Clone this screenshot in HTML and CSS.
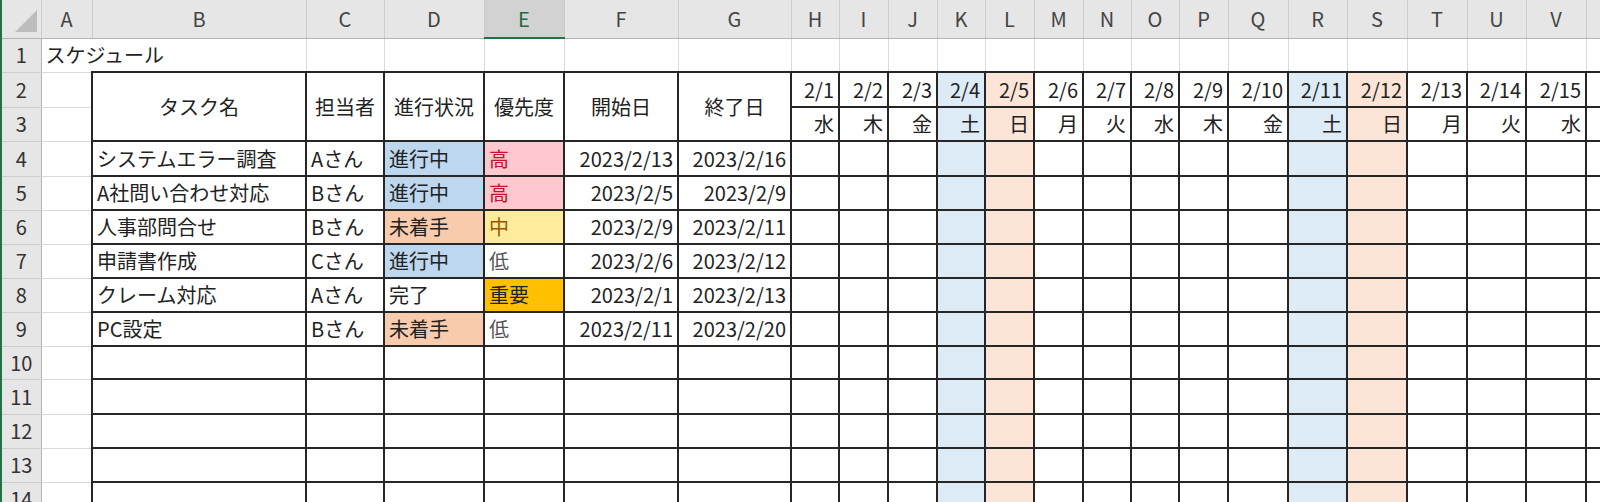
FILE: index.html
```html
<!DOCTYPE html>
<html lang="ja">
<head>
    <meta charset="UTF-8">
    <title>スケジュール</title>
    <link rel="stylesheet" href="styles.css">
</head>
<body>
<div class="sheet">
<table class="grid">
    <colgroup>
        <col class="w-rh"><col class="w-a"><col class="w-b"><col class="w-c"><col class="w-d"><col class="w-e"><col class="w-f"><col class="w-g">
        <col class="w-48"><col class="w-49"><col class="w-49"><col class="w-48"><col class="w-49"><col class="w-49"><col class="w-48"><col class="w-48"><col class="w-49">
        <col class="w-60"><col class="w-59"><col class="w-60"><col class="w-60"><col class="w-59"><col class="w-60"><col class="w-60">
    </colgroup>
    <thead>
        <tr class="colhead">
            <th class="corner"><span class="tri"></span></th>
            <th>A</th><th>B</th><th>C</th><th>D</th><th class="sel">E</th><th>F</th><th>G</th>
            <th>H</th><th>I</th><th>J</th><th>K</th><th>L</th><th>M</th><th>N</th><th>O</th><th>P</th>
            <th>Q</th><th>R</th><th>S</th><th>T</th><th>U</th><th>V</th><th></th>
        </tr>
    </thead>
    <tbody class="top">
        <tr class="r34">
            <th class="rh">1</th>
            <td colspan="2" class="title">スケジュール</td>
            <td></td><td></td><td></td><td></td><td></td>
            <td></td><td></td><td></td><td></td><td></td><td></td><td></td><td></td><td></td>
            <td></td><td></td><td></td><td></td><td></td><td></td><td></td>
        </tr>
    </tbody>
    <tbody class="tasks">
        <tr class="r35">
            <th class="rh">2</th>
            <td class="a"></td>
            <td rowspan="2" class="head">タスク名</td>
            <td rowspan="2" class="head">担当者</td>
            <td rowspan="2" class="head">進行状況</td>
            <td rowspan="2" class="head">優先度</td>
            <td rowspan="2" class="head">開始日</td>
            <td rowspan="2" class="head">終了日</td>
            <td class="num">2/1</td><td class="num">2/2</td><td class="num">2/3</td>
            <td class="num sat">2/4</td><td class="num sun">2/5</td>
            <td class="num">2/6</td><td class="num">2/7</td><td class="num">2/8</td><td class="num">2/9</td><td class="num">2/10</td>
            <td class="num sat">2/11</td><td class="num sun">2/12</td>
            <td class="num">2/13</td><td class="num">2/14</td><td class="num">2/15</td><td></td>
        </tr>
        <tr class="r34">
            <th class="rh">3</th>
            <td class="a"></td>
            <td class="num">水</td><td class="num">木</td><td class="num">金</td>
            <td class="num sat">土</td><td class="num sun">日</td>
            <td class="num">月</td><td class="num">火</td><td class="num">水</td><td class="num">木</td><td class="num">金</td>
            <td class="num sat">土</td><td class="num sun">日</td>
            <td class="num">月</td><td class="num">火</td><td class="num">水</td><td></td>
        </tr>
        <tr class="r35">
            <th class="rh">4</th><td class="a"></td>
            <td>システムエラー調査</td><td>Aさん</td><td class="doing">進行中</td><td class="high">高</td>
            <td class="num">2023/2/13</td><td class="num">2023/2/16</td>
            <td></td><td></td><td></td><td class="sat"></td><td class="sun"></td><td></td><td></td><td></td><td></td><td></td><td class="sat"></td><td class="sun"></td><td></td><td></td><td></td><td></td>
        </tr>
        <tr class="r34">
            <th class="rh">5</th><td class="a"></td>
            <td>A社問い合わせ対応</td><td>Bさん</td><td class="doing">進行中</td><td class="high">高</td>
            <td class="num">2023/2/5</td><td class="num">2023/2/9</td>
            <td></td><td></td><td></td><td class="sat"></td><td class="sun"></td><td></td><td></td><td></td><td></td><td></td><td class="sat"></td><td class="sun"></td><td></td><td></td><td></td><td></td>
        </tr>
        <tr class="r34">
            <th class="rh">6</th><td class="a"></td>
            <td>人事部問合せ</td><td>Bさん</td><td class="todo">未着手</td><td class="mid">中</td>
            <td class="num">2023/2/9</td><td class="num">2023/2/11</td>
            <td></td><td></td><td></td><td class="sat"></td><td class="sun"></td><td></td><td></td><td></td><td></td><td></td><td class="sat"></td><td class="sun"></td><td></td><td></td><td></td><td></td>
        </tr>
        <tr class="r34">
            <th class="rh">7</th><td class="a"></td>
            <td>申請書作成</td><td>Cさん</td><td class="doing">進行中</td><td class="low">低</td>
            <td class="num">2023/2/6</td><td class="num">2023/2/12</td>
            <td></td><td></td><td></td><td class="sat"></td><td class="sun"></td><td></td><td></td><td></td><td></td><td></td><td class="sat"></td><td class="sun"></td><td></td><td></td><td></td><td></td>
        </tr>
        <tr class="r34">
            <th class="rh">8</th><td class="a"></td>
            <td>クレーム対応</td><td>Aさん</td><td>完了</td><td class="urgent">重要</td>
            <td class="num">2023/2/1</td><td class="num">2023/2/13</td>
            <td></td><td></td><td></td><td class="sat"></td><td class="sun"></td><td></td><td></td><td></td><td></td><td></td><td class="sat"></td><td class="sun"></td><td></td><td></td><td></td><td></td>
        </tr>
        <tr class="r34">
            <th class="rh">9</th><td class="a"></td>
            <td>PC設定</td><td>Bさん</td><td class="todo">未着手</td><td class="low">低</td>
            <td class="num">2023/2/11</td><td class="num">2023/2/20</td>
            <td></td><td></td><td></td><td class="sat"></td><td class="sun"></td><td></td><td></td><td></td><td></td><td></td><td class="sat"></td><td class="sun"></td><td></td><td></td><td></td><td></td>
        </tr>
        <tr class="r33">
            <th class="rh">10</th><td class="a"></td>
            <td></td><td></td><td></td><td></td><td></td><td></td>
            <td></td><td></td><td></td><td class="sat"></td><td class="sun"></td><td></td><td></td><td></td><td></td><td></td><td class="sat"></td><td class="sun"></td><td></td><td></td><td></td><td></td>
        </tr>
        <tr class="r35">
            <th class="rh">11</th><td class="a"></td>
            <td></td><td></td><td></td><td></td><td></td><td></td>
            <td></td><td></td><td></td><td class="sat"></td><td class="sun"></td><td></td><td></td><td></td><td></td><td></td><td class="sat"></td><td class="sun"></td><td></td><td></td><td></td><td></td>
        </tr>
        <tr class="r34">
            <th class="rh">12</th><td class="a"></td>
            <td></td><td></td><td></td><td></td><td></td><td></td>
            <td></td><td></td><td></td><td class="sat"></td><td class="sun"></td><td></td><td></td><td></td><td></td><td></td><td class="sat"></td><td class="sun"></td><td></td><td></td><td></td><td></td>
        </tr>
        <tr class="r34">
            <th class="rh">13</th><td class="a"></td>
            <td></td><td></td><td></td><td></td><td></td><td></td>
            <td></td><td></td><td></td><td class="sat"></td><td class="sun"></td><td></td><td></td><td></td><td></td><td></td><td class="sat"></td><td class="sun"></td><td></td><td></td><td></td><td></td>
        </tr>
        <tr class="r34">
            <th class="rh">14</th><td class="a"></td>
            <td></td><td></td><td></td><td></td><td></td><td></td>
            <td></td><td></td><td></td><td class="sat"></td><td class="sun"></td><td></td><td></td><td></td><td></td><td></td><td class="sat"></td><td class="sun"></td><td></td><td></td><td></td><td></td>
        </tr>
    </tbody>
</table>
</div>
</body>
</html>
```

FILE: styles.css
```css
body {
    margin: 0;
    padding: 0;
    background: #ffffff;
    overflow: hidden;
    font-family: "Noto Sans CJK JP", "Noto Sans", sans-serif;
    color: #222222;
}
.sheet {
    width: 1646px;
    border-left: 2px solid #217346;
}
.grid {
    border-collapse: collapse;
    table-layout: fixed;
    width: 1644px;
    font-size: 20px;
    line-height: 1;
}
.w-rh { width: 39px; }
.w-a { width: 51px; }
.w-b { width: 214px; }
.w-c { width: 78px; }
.w-d { width: 100px; }
.w-e { width: 80px; }
.w-f { width: 114px; }
.w-g { width: 113px; }
.w-48 { width: 48px; }
.w-49 { width: 49px; }
.w-59 { width: 59px; }
.w-60 { width: 60px; }

.grid td {
    padding: 0 4px;
    white-space: nowrap;
    overflow: visible;
    vertical-align: middle;
    border: 1px solid #dadada;
}

/* column letters */
.colhead {
    height: 38px;
}
.colhead th {
    background: #e6e6e6;
    color: #444444;
    font-weight: normal;
    font-size: 20px;
    border-right: 1px solid #cdcdcd;
    border-bottom: 1px solid #b3b3b3;
    padding: 0;
}
.colhead th.sel {
    background: #d2d2d2;
    color: #1e6b41;
    border-bottom: 2px solid #217346;
}
.corner {
    text-align: right;
    vertical-align: bottom;
}
.tri {
    display: inline-block;
    width: 0;
    height: 0;
    margin: 0 4px 4px 0;
    border-left: 22px solid transparent;
    border-bottom: 22px solid #bdbdbd;
}

/* row numbers */
.rh {
    background: #e6e6e6;
    color: #333333;
    font-weight: normal;
    font-size: 20px;
    text-align: center;
    padding: 0;
    border-right: 1px solid #b3b3b3;
    border-bottom: 1px solid #cdcdcd;
}
.r33 { height: 33px; }
.r34 { height: 34px; }
.r35 { height: 35px; }

.title {
    padding-left: 5px;
}

/* bordered task table */
.tasks td {
    border: 2px solid #262626;
}
.tasks td.a {
    border: 1px solid #dadada;
}
.tasks .head {
    text-align: center;
}
.num {
    text-align: right;
}

.sat { background: #ddebf7; }
.sun { background: #fce4d6; }

.doing { background: #bdd7ee; }
.todo { background: #f8cbad; }
.high {
    background: #ffc7ce;
    color: #c8102e;
}
.mid {
    background: #ffeb9c;
    color: #9c5700;
}
.low {
    color: #555555;
}
.urgent {
    background: #ffc000;
}
```
